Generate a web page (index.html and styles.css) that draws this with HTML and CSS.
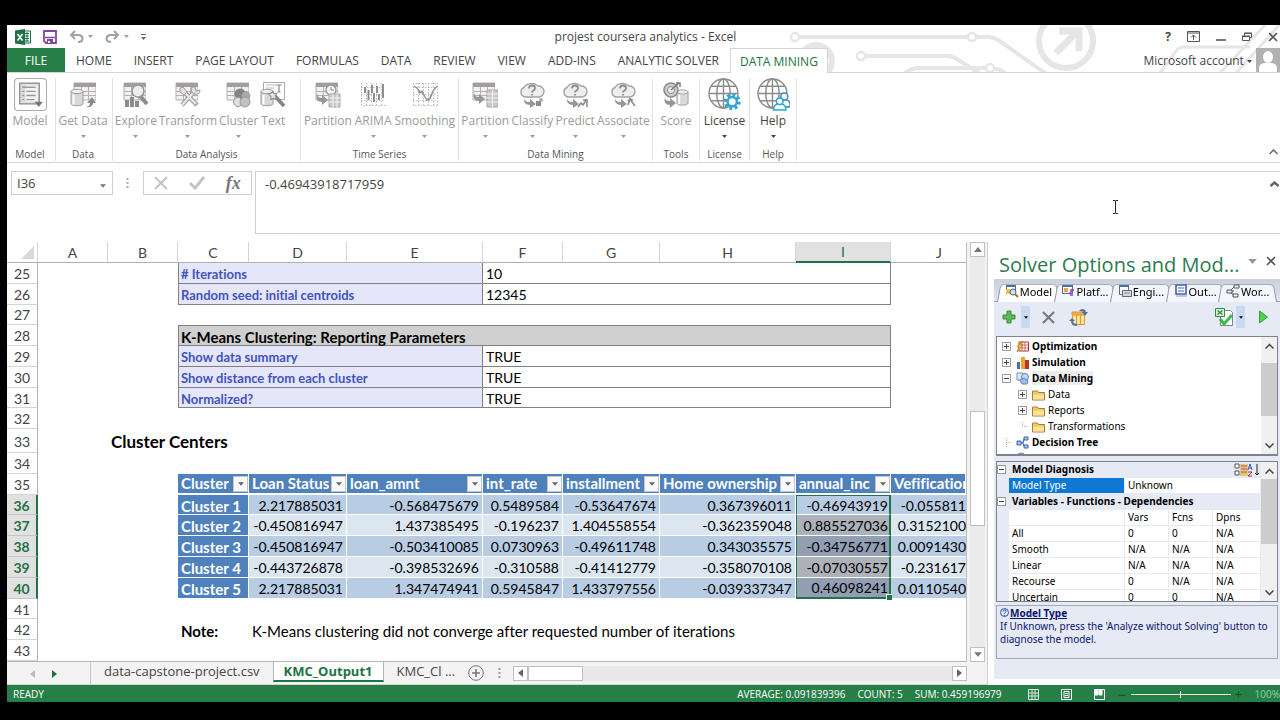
FILE: index.html
```html
<!DOCTYPE html>
<html lang="en">

<head>
    <meta charset="UTF-8">
    <meta name="viewport" content="width=device-width, initial-scale=1.0">
    <title>projest coursera analytics - Excel</title>
    <link rel="stylesheet" href="styles.css">
</head>

<body>
    <!-- shared icon parts -->
    <svg class="defs" aria-hidden="true">
        <symbol id="grid" viewBox="0 0 26 26">
            <path d="M4 1h22v17H4z" fill="#f2f0f1" stroke="#b3b1b2" />
            <path d="M4 1h22v4H4z" fill="#a09ea0" />
            <path d="M4 9.5h22M4 13.5h22M11.5 5v13M18.5 5v13" stroke="#b3b1b2" fill="none" />
        </symbol>
        <symbol id="cloud" viewBox="0 0 26 26">
            <path d="M6 15a5 5 0 0 1-1-9.5A8 6 0 0 1 19 4a5.5 5.5 0 0 1 1 11z" fill="#efeeef" stroke="#a3a1a3" stroke-width="1.4" />
            <path d="M10 6.5q0-3 3-3t3 2.5q0 1.5-1.5 2.5t-1.5 2M13 12v1.5" fill="none" stroke="#8d8b8d" stroke-width="1.8" />
            <path d="M5 16q0 4 6 4v-3l6 5-6 4v-3q-7 0-6-7z" fill="#989698" />
        </symbol>
        <symbol id="db" viewBox="0 0 14 18">
            <path d="M1 3v12c0 3 12 3 12 0V3z" fill="#d9d7d8" stroke="#9d9b9d" />
            <ellipse cx="7" cy="3" rx="6" ry="2.2" fill="#efeeef" stroke="#9d9b9d" />
            <path d="M3.5 6v10" stroke="#fff" stroke-width="2" />
        </symbol>
        <symbol id="globe" viewBox="0 0 32 32">
            <g fill="none" stroke="#8b8b8b" stroke-width="1.4">
                <circle cx="15" cy="15" r="14" fill="#fff" />
                <ellipse cx="15" cy="15" rx="6.5" ry="14" />
                <path d="M15 1v28M1 15h28M3 8h24M3 22h24" />
            </g>
        </symbol>
        <symbol id="folder" viewBox="0 0 13 12">
            <path d="M.5 2.5h5l1 1.5h6v7.5h-12z" fill="#efc65c" stroke="#a4813a" />
            <path d="M1 6h11v5H1z" fill="#fbe29a" />
        </symbol>
        <symbol id="plusbox" viewBox="0 0 9 9">
            <path d="M.5.5h8v8h-8z" fill="#fff" stroke="#9a9a9a" />
            <path d="M2 4.5h5M4.5 2v5" stroke="#445" />
        </symbol>
        <symbol id="minusbox" viewBox="0 0 9 9">
            <path d="M.5.5h8v8h-8z" fill="#fff" stroke="#9a9a9a" />
            <path d="M2 4.5h5" stroke="#445" />
        </symbol>
        <symbol id="down" viewBox="0 0 7 4">
            <path d="M0 0h7L3.5 4z" fill="currentColor" />
        </symbol>
    </svg>

    <div class="app">
        <header class="top">
            <svg class="circuit" viewBox="0 0 490 47" fill="none" stroke="#e6e6e6" stroke-width="4">
                <path d="M9 12h169M186 12h12q6 0 10 3l47 33M75 31h82q6 0 10 3l22 14M115 48q6-5 14-5h67M205 44q6 0 10 4" />
                <circle cx="5" cy="12" r="4" stroke-width="2.5" />
                <circle cx="182" cy="12" r="4" stroke-width="2.5" />
                <circle cx="71" cy="31" r="4" stroke-width="2.5" />
                <circle cx="200" cy="43" r="4" stroke-width="2.5" />
                <circle cx="26" cy="36" r="16" stroke-width="6" />
                <circle cx="276" cy="16" r="27" stroke-width="6" />
                <path d="M266 28l20-20M269 6h20v20" stroke-width="7" />
                <path d="M370 48l16-22q3-4 8-4h66M430 48l45-48M446 48l45-50" stroke-width="3" />
            </svg>
            <div class="title-bar">
                <div class="quick">
                    <svg width="16" height="16" viewBox="0 0 16 16">
                        <path d="M8 2h7.5v12H8z" fill="#fff" stroke="#1e7145" />
                        <path d="M9 4.5h5M9 7h5M9 9.5h5M9 12h5M12 3v10" stroke="#1e7145" />
                        <path d="M0 1.5L10 0v16L0 14.5z" fill="#1e7145" />
                        <path d="M2.5 5l5 6.5M7.5 5l-5 6.5" stroke="#fff" stroke-width="1.6" />
                    </svg>
                    <button type="button" aria-label="Save">
                        <svg width="14" height="14" viewBox="0 0 14 14">
                            <path d="M1 1h12v12H3l-2-2z" fill="#fff" stroke="#80499c" stroke-width="1.8" />
                            <path d="M2 7.5h10" stroke="#80499c" stroke-width="1.5" />
                            <path d="M4 9h6v5H4z" fill="#80499c" />
                            <path d="M5 11h2v2H5z" fill="#fff" />
                        </svg>
                    </button>
                    <button type="button" aria-label="Undo" class="undo">
                        <svg width="15" height="13" viewBox="0 0 15 13" fill="none" stroke="#a0a0a0" stroke-width="2">
                            <path d="M6 1L2 5l4 4M2 5h7q4.5 0 4.5 3.5T9 12" />
                        </svg>
                        <svg class="gray" width="5" height="3"><use href="#down" /></svg>
                    </button>
                    <button type="button" aria-label="Redo" class="undo">
                        <svg width="15" height="13" viewBox="0 0 15 13" fill="none" stroke="#a0a0a0" stroke-width="2">
                            <path d="M9 1l4 4-4 4M13 5H6Q1.5 5 1.5 8.5T6 12" />
                        </svg>
                        <svg class="gray" width="5" height="3"><use href="#down" /></svg>
                    </button>
                    <button type="button" aria-label="Customize toolbar">
                        <svg width="5" height="6" viewBox="0 0 5 6"><path d="M0 .5h5" stroke="#666" /><path d="M0 3h5L2.5 6z" fill="#666" /></svg>
                    </button>
                </div>
                <div class="title">projest coursera analytics - Excel</div>
                <div class="window-buttons">
                    <button type="button">?</button>
                    <button type="button" aria-label="Ribbon options">
                        <svg width="13" height="11" viewBox="0 0 13 11" fill="none" stroke="#555"><path d="M.5.5h12v10H.5zM1 2h11M6.5 9V4M4 6.5L6.5 4 9 6.5" /></svg>
                    </button>
                    <button type="button" aria-label="Minimize">
                        <svg width="10" height="11" viewBox="0 0 10 11"><path d="M0 9h10" stroke="#555" stroke-width="1.6" /></svg>
                    </button>
                    <button type="button" aria-label="Restore">
                        <svg width="10" height="10" viewBox="0 0 10 10" fill="none" stroke="#555"><path d="M.5 4.5h7v4h-7zM2.5 4V1.5h7v4H8M2 1h8M0 4h8" /></svg>
                    </button>
                    <button type="button" aria-label="Close">
                        <svg width="10" height="10" viewBox="0 0 10 10" stroke="#555" stroke-width="1.6"><path d="M1 1l8 8M9 1L1 9" /></svg>
                    </button>
                </div>
            </div>
            <nav class="tabs">
                <button type="button" class="file">FILE</button>
                <button type="button">HOME</button>
                <button type="button">INSERT</button>
                <button type="button">PAGE LAYOUT</button>
                <button type="button">FORMULAS</button>
                <button type="button">DATA</button>
                <button type="button">REVIEW</button>
                <button type="button">VIEW</button>
                <button type="button">ADD-INS</button>
                <button type="button">ANALYTIC SOLVER</button>
                <button type="button" class="active">DATA MINING</button>
                <div class="account">
                    <button type="button">Microsoft account <svg width="5" height="3"><use href="#down" /></svg></button>
                    <svg width="24" height="24" viewBox="0 0 24 24">
                        <path d="M0 0h24v24H0z" fill="#b1b1b1" />
                        <ellipse cx="12" cy="9" rx="5" ry="6" fill="#fff" />
                        <path d="M3 24v-4q0-4 5-5h8q5 1 5 5v4z" fill="#fff" />
                    </svg>
                </div>
            </nav>
        </header>

        <section class="ribbon">
            <div class="group w-model">
                <div class="buttons">
                    <button type="button" class="off">
                        <svg class="big" viewBox="0 0 32 32">
                            <path d="M.5 4q0-3.5 3.5-3.5h24q3.5 0 3.5 3.5v24q0 3.500-3.500 3.500H4q-3.500 0-3.500-3.500z" fill="#fff" stroke="#aaa" />
                            <path d="M5.5 5h19v20h-19z" fill="#dddbdc" stroke="#8a8a8a" stroke-width="1.2" />
                            <path d="M11 7h12v16H11z" fill="#f4f3f4" />
                            <path d="M8 9h4M12 9h9M12 13h9M8 13h2M12 17h9M8 17h2M12 21h8M8 21h2" stroke="#9a989a" stroke-width="1.3" />
                            <path d="M20 23h8l-4 5z" fill="#777" />
                        </svg>
                        <span>Model</span>
                    </button>
                </div>
                <div class="name">Model</div>
            </div>
            <div class="group w-data">
                <div class="buttons">
                    <button type="button" class="off">
                        <svg viewBox="0 0 26 26"><use href="#grid" width="26" height="26" /><use href="#db" y="6" width="14" height="19" /><path d="M15 25q5 0 5-4h-3l5-6 4 6h-3q0 5-8 4z" fill="#8d8b8d" /></svg>
                        <span>Get Data</span><svg class="arrow"><use href="#down" /></svg>
                    </button>
                </div>
                <div class="name">Data</div>
            </div>
            <div class="group w-analysis">
                <div class="buttons">
                    <button type="button" class="off">
                        <svg viewBox="0 0 26 26"><use href="#grid" x="-3" width="26" height="26" /><path d="M2 18h4v7H2zM7 15h4v10H7zM12 19h4v6h-4z" fill="#8d8b8d" /><path d="M17 14l7 8" stroke="#8d8b8d" stroke-width="4" /><circle cx="15" cy="9" r="6" fill="#eeedee" stroke="#999799" stroke-width="1.6" /></svg>
                        <span>Explore</span><svg class="arrow"><use href="#down" /></svg>
                    </button>
                    <button type="button" class="off">
                        <svg viewBox="0 0 26 26"><use href="#grid" x="-3" width="26" height="26" /><path d="M7 23L20 9M8 9l14 14" stroke="#9d9b9d" stroke-width="4.5" /><path d="M7 23L20 9M10 11l11 11" stroke="#e8e6e8" stroke-width="2.4" /><path d="M17 5q-2 6 3 7t5-4l-4 1-1-4zM5 6l3-1 4 5-3 3-4-3z" fill="#e2e0e2" stroke="#9d9b9d" /></svg>
                        <span>Transform</span><svg class="arrow"><use href="#down" /></svg>
                    </button>
                    <button type="button" class="off">
                        <svg viewBox="0 0 26 26"><use href="#grid" x="-3" width="26" height="26" /><circle cx="14" cy="12" r="5.5" fill="#858385" /><circle cx="20" cy="14" r="4.5" fill="#aaa8aa" /><circle cx="12" cy="20" r="4.5" fill="#e0dee0" stroke="#999" /><circle cx="19" cy="20" r="5" fill="#c2c0c2" stroke="#999" /></svg>
                        <span>Cluster</span><svg class="arrow"><use href="#down" /></svg>
                    </button>
                    <button type="button" class="off">
                        <svg viewBox="0 0 26 26"><path d="M3.5.5h21v17h-21z" fill="#fff" stroke="#aaa" /><path d="M6 3h10M6 6h8" stroke="#bbb" /><path d="M16 3h6M19 3v7M17.5 10h3" stroke="#888" stroke-width="1.2" fill="none" /><use href="#db" y="6" width="14" height="19" /><path d="M14 13l10 11" stroke="#858385" stroke-width="3.5" /><path d="M13 9l1 3 3-1-2 3 2 3-4-1-2 2v-4l-3-2 4-1z" fill="#e8e6e8" stroke="#888" /></svg>
                        <span>Text</span>
                    </button>
                </div>
                <div class="name">Data Analysis</div>
            </div>
            <div class="group w-series">
                <div class="buttons">
                    <button type="button" class="off">
                        <svg viewBox="0 0 26 26"><use href="#grid" x="-3" width="26" height="26" /><circle cx="16" cy="8" r="5" fill="#f4f3f4" stroke="#999" stroke-width="1.4" /><path d="M16 5v3h3" stroke="#888" fill="none" /><path d="M2 11q0 5 5 5v-3l6 5-6 5v-3q-7 0-5-9z" fill="#989698" /><path d="M14 12h11v13H14z" fill="#c9c7c9" stroke="#aaa" /><path d="M14 16h11M14 20h11M18 12v13M22 12v13" stroke="#f4f3f4" /></svg>
                        <span>Partition</span>
                    </button>
                    <button type="button" class="off">
                        <svg viewBox="0 0 26 26"><path d="M1.5 1v22.5H26M6.5 1v22M11.5 1v22M16.5 1v22M21.5 1v22M1 5.5h24M1 12.5h24M1 18.5h24" stroke="#bbb" stroke-dasharray="1.5 1.5" fill="none" /><path d="M5 5v6M8.5 8v10M12 3v8M14 11v9M17 4v7M19 12v6M23 2v14" stroke="#858385" stroke-width="1.8" /></svg>
                        <span>ARIMA</span><svg class="arrow"><use href="#down" /></svg>
                    </button>
                    <button type="button" class="off">
                        <svg viewBox="0 0 26 26"><path d="M1.5 1v22.5H26M6.5 1v22M11.5 1v22M16.5 1v22M21.5 1v22M25.5 1v22M1 1.500h24M1 5.5h24M1 12.5h24M1 18.5h24" stroke="#bbb" stroke-dasharray="1.5 1.5" fill="none" /><path d="M2 4l3 2 3 5 2-2 3 6 2 3 3-1 3-8 4-5" stroke="#858385" stroke-width="1.3" fill="none" /><path d="M2 4q8 5 12 13 4 0 5-5l6-8" stroke="#aaa" fill="none" /></svg>
                        <span>Smoothing</span><svg class="arrow"><use href="#down" /></svg>
                    </button>
                </div>
                <div class="name">Time Series</div>
            </div>
            <div class="group w-mining">
                <div class="buttons">
                    <button type="button" class="off">
                        <svg viewBox="0 0 26 26"><use href="#grid" x="-3" width="26" height="26" /><path d="M2 10q0 5 5 5v-3l6 5-6 5v-3q-7 0-5-9z" fill="#989698" /><path d="M15 8h11v17H15z" fill="#c9c7c9" stroke="#aaa" /><path d="M15 12h11M15 16h11M15 20h11M20.5 8v17" stroke="#f4f3f4" /></svg>
                        <span>Partition</span><svg class="arrow"><use href="#down" /></svg>
                    </button>
                    <button type="button" class="off">
                        <svg viewBox="0 0 26 26"><use href="#cloud" width="26" height="26" /><path d="M17 19h5v5h-5z" fill="#8d8b8d" /><circle cx="22" cy="18" r="2" fill="#aaa" /></svg>
                        <span>Classify</span><svg class="arrow"><use href="#down" /></svg>
                    </button>
                    <button type="button" class="off">
                        <svg viewBox="0 0 26 26"><use href="#cloud" width="26" height="26" /><path d="M16 25l3-4 2 2 4-6M25 25v-7h-4" stroke="#8d8b8d" stroke-width="1.6" fill="none" /></svg>
                        <span>Predict</span><svg class="arrow"><use href="#down" /></svg>
                    </button>
                    <button type="button" class="off">
                        <svg viewBox="0 0 26 26"><use href="#cloud" width="26" height="26" /><path d="M18 23l2-6 2 3 3 4M18 19l2-2 3 1" stroke="#8d8b8d" stroke-width="1.6" fill="none" /></svg>
                        <span>Associate</span><svg class="arrow"><use href="#down" /></svg>
                    </button>
                </div>
                <div class="name">Data Mining</div>
            </div>
            <div class="group w-tools">
                <div class="buttons">
                    <button type="button" class="off">
                        <svg viewBox="0 0 26 26"><use href="#db" x="13" y="6" width="13" height="19" /><circle cx="8" cy="8" r="7" fill="#ccc" stroke="#8d8b8d" stroke-width="1.6" /><circle cx="8" cy="8" r="3.5" fill="#eee" stroke="#8d8b8d" /><path d="M8 8l8-7M13 1h4v4" stroke="#777" stroke-width="1.4" fill="none" /><path d="M2 15q0 4 5 4v-3l6 5-6 5v-3q-7 0-5-8z" fill="#989698" /></svg>
                        <span>Score</span>
                    </button>
                </div>
                <div class="name">Tools</div>
            </div>
            <div class="group w-license">
                <div class="buttons">
                    <button type="button">
                        <svg class="big" viewBox="0 0 32 32"><use href="#globe" width="32" height="32" /><circle cx="23.5" cy="23" r="6.5" fill="none" stroke="#2da5d8" stroke-width="3.5" stroke-dasharray="2.6 2.5" /><circle cx="23.5" cy="23" r="4.5" fill="#fff" stroke="#2da5d8" stroke-width="2.4" /></svg>
                        <span>License</span><svg class="arrow"><use href="#down" /></svg>
                    </button>
                </div>
                <div class="name">License</div>
            </div>
            <div class="group w-help">
                <div class="buttons">
                    <button type="button">
                        <svg class="big" viewBox="0 0 32 32"><use href="#globe" width="32" height="32" /><g fill="#fff" stroke-width="1.5"><path d="M21 28q0-7 6-7t5 7z" stroke="#4a8fb5" /><circle cx="26.5" cy="18" r="3.4" stroke="#4a8fb5" /><path d="M16 31q0-6 6-6t6 6z" stroke="#2da5d8" /><circle cx="22" cy="22.5" r="3.2" stroke="#2da5d8" /></g></svg>
                        <span>Help</span><svg class="arrow"><use href="#down" /></svg>
                    </button>
                </div>
                <div class="name">Help</div>
            </div>
            <button type="button" class="collapse" aria-label="Collapse the ribbon">
                <svg width="9" height="6" viewBox="0 0 9 6" fill="none" stroke="#666" stroke-width="1.5"><path d="M.5 5l4-4 4 4" /></svg>
            </button>
        </section>

        <section class="formula-bar">
            <div class="name-box">
                <input type="text" value="I36" aria-label="Name box">
                <button type="button" aria-label="Names"><svg width="6" height="4"><use href="#down" /></svg></button>
            </div>
            <svg class="grip" width="3" height="24" viewBox="0 0 3 24"><path d="M1.5 7v12" stroke="#aaa" stroke-width="2" stroke-dasharray="2 2" /></svg>
            <div class="fx-box">
                <button type="button" aria-label="Cancel"><svg width="14" height="14" viewBox="0 0 14 14" stroke="#c3c3c3" stroke-width="2"><path d="M1 1l12 12M13 1L1 13" /></svg></button>
                <button type="button" aria-label="Enter"><svg width="16" height="14" viewBox="0 0 16 14" fill="none" stroke="#c3c3c3" stroke-width="3"><path d="M1 7l5 5 9-11" /></svg></button>
                <button type="button" class="fx">fx</button>
            </div>
            <textarea class="formula" aria-label="Formula">-0.46943918717959</textarea>
            <button type="button" class="shrink" aria-label="Collapse formula bar"><svg width="9" height="6" viewBox="0 0 9 6" fill="none" stroke="#666" stroke-width="2.4"><path d="M.5 5l4-3.5 4 3.5" /></svg></button>
            <svg class="ibeam" width="7" height="14" viewBox="0 0 7 14" fill="none" stroke="#222"><path d="M1 .5h2l.5.5.5-.5h2M3.5 1v12M1 13.5h2l.5-.5.5.5h2" /></svg>
        </section>

        <main class="work">
            <div class="book">
                <div class="sheet-row">
                    <div class="sheet-wrap">
                        <table class="sheet">
                            <colgroup>
                                <col class="c-num"><col class="c-70"><col class="c-70"><col class="c-71"><col class="c-98"><col class="c-136"><col class="c-80"><col class="c-97"><col class="c-136"><col class="c-95"><col>
                            </colgroup>
                            <thead>
                                <tr>
                                    <th class="corner"><svg width="13" height="13" viewBox="0 0 13 13"><path d="M13 0v13H0z" fill="#d9d9d9" /></svg></th>
                                    <th>A</th><th>B</th><th>C</th><th>D</th><th>E</th><th>F</th><th>G</th><th>H</th><th class="picked">I</th><th class="partial">J</th>
                                </tr>
                            </thead>
                            <tbody>
                                <tr><th>25</th><td colspan="2"></td><td colspan="3" class="param"># Iterations</td><td colspan="4" class="value">10</td><td></td></tr>
                                <tr><th>26</th><td colspan="2"></td><td colspan="3" class="param">Random seed: initial centroids</td><td colspan="4" class="value">12345</td><td></td></tr>
                                <tr><th>27</th><td colspan="10"></td></tr>
                                <tr><th>28</th><td colspan="2"></td><td colspan="7" class="caption">K-Means Clustering: Reporting Parameters</td><td></td></tr>
                                <tr><th>29</th><td colspan="2"></td><td colspan="3" class="param">Show data summary</td><td colspan="4" class="value">TRUE</td><td></td></tr>
                                <tr><th>30</th><td colspan="2"></td><td colspan="3" class="param">Show distance from each cluster</td><td colspan="4" class="value">TRUE</td><td></td></tr>
                                <tr><th>31</th><td colspan="2"></td><td colspan="3" class="param">Normalized?</td><td colspan="4" class="value">TRUE</td><td></td></tr>
                                <tr><th>32</th><td colspan="10"></td></tr>
                                <tr class="tall"><th>33</th><td></td><td colspan="9" class="heading">Cluster Centers</td></tr>
                                <tr><th>34</th><td colspan="10"></td></tr>
                                <tr class="head">
                                    <th>35</th><td colspan="2"></td>
                                    <td><div><span>Cluster</span><button type="button" aria-label="Filter Cluster"><svg><use href="#down" /></svg></button></div></td>
                                    <td><div><span>Loan Status</span><button type="button" aria-label="Filter Loan Status"><svg><use href="#down" /></svg></button></div></td>
                                    <td><div><span>loan_amnt</span><button type="button" aria-label="Filter loan_amnt"><svg><use href="#down" /></svg></button></div></td>
                                    <td><div><span>int_rate</span><button type="button" aria-label="Filter int_rate"><svg><use href="#down" /></svg></button></div></td>
                                    <td><div><span>installment</span><button type="button" aria-label="Filter installment"><svg><use href="#down" /></svg></button></div></td>
                                    <td><div><span>Home ownership</span><button type="button" aria-label="Filter Home ownership"><svg><use href="#down" /></svg></button></div></td>
                                    <td><div><span>annual_inc</span><button type="button" aria-label="Filter annual_inc"><svg><use href="#down" /></svg></button></div></td>
                                    <td><div><span>Vefification</span></div></td>
                                </tr>
                                <tr class="data"><th>36</th><td colspan="2"></td><td class="key">Cluster 1</td><td>2.217885031</td><td>-0.568475679</td><td>0.5489584</td><td>-0.53647674</td><td>0.367396011</td><td class="sel first">-0.46943919</td><td class="cut">-0.055811</td></tr>
                                <tr class="data"><th>37</th><td colspan="2"></td><td class="key">Cluster 2</td><td>-0.450816947</td><td>1.437385495</td><td>-0.196237</td><td>1.404558554</td><td>-0.362359048</td><td class="sel">0.885527036</td><td class="cut">0.3152100</td></tr>
                                <tr class="data"><th>38</th><td colspan="2"></td><td class="key">Cluster 3</td><td>-0.450816947</td><td>-0.503410085</td><td>0.0730963</td><td>-0.49611748</td><td>0.343035575</td><td class="sel">-0.34756771</td><td class="cut">0.0091430</td></tr>
                                <tr class="data"><th>39</th><td colspan="2"></td><td class="key">Cluster 4</td><td>-0.443726878</td><td>-0.398532696</td><td>-0.310588</td><td>-0.41412779</td><td>-0.358070108</td><td class="sel">-0.07030557</td><td class="cut">-0.231617</td></tr>
                                <tr class="data"><th>40</th><td colspan="2"></td><td class="key">Cluster 5</td><td>2.217885031</td><td>1.347474941</td><td>0.5945847</td><td>1.433797556</td><td>-0.039337347</td><td class="sel last">0.46098241</td><td class="cut">0.0110540</td></tr>
                                <tr><th>41</th><td colspan="10"></td></tr>
                                <tr><th>42</th><td colspan="2"></td><td class="note"><b>Note:</b></td><td colspan="7" class="note">K-Means clustering did not converge after requested number of iterations</td></tr>
                                <tr><th>43</th><td colspan="10"></td></tr>
                            </tbody>
                        </table>
                    </div>
                    <div class="vscroll">
                        <button type="button" aria-label="Scroll up"><svg width="8" height="5" viewBox="0 0 8 5"><path d="M0 5h8L4 0z" fill="#777" /></svg></button>
                        <div class="track"><div class="thumb"></div></div>
                        <button type="button" aria-label="Scroll down"><svg width="8" height="5"><use href="#down" /></svg></button>
                    </div>
                </div>
                <div class="sheet-tabs">
                    <button type="button" class="step" aria-label="Previous sheet"><svg width="5" height="8" viewBox="0 0 5 8"><path d="M5 0v8L0 4z" fill="#bbb" /></svg></button>
                    <button type="button" class="step" aria-label="Next sheet"><svg width="5" height="8" viewBox="0 0 5 8"><path d="M0 0v8l5-4z" fill="#1e7145" /></svg></button>
                    <div class="names">
                        <button type="button">data-capstone-project.csv</button>
                        <button type="button" class="active">KMC_Output1</button>
                        <button type="button">KMC_Cl ...</button>
                    </div>
                    <button type="button" class="add" aria-label="New sheet"><svg width="16" height="16" viewBox="0 0 16 16" fill="none" stroke="#777"><circle cx="8" cy="8" r="7.3" /><path d="M8 4v8M4 8h8" stroke-width="1.6" /></svg></button>
                    <svg class="dots" width="3" height="12" viewBox="0 0 3 12"><path d="M1.5 1v10" stroke="#999" stroke-width="2" stroke-dasharray="2 2" /></svg>
                    <div class="hscroll">
                        <button type="button" aria-label="Scroll left"><svg width="5" height="8" viewBox="0 0 5 8"><path d="M5 0v8L0 4z" fill="#666" /></svg></button>
                        <div class="track"><div class="thumb"></div></div>
                        <button type="button" aria-label="Scroll right"><svg width="5" height="8" viewBox="0 0 5 8"><path d="M0 0v8l5-4z" fill="#666" /></svg></button>
                    </div>
                </div>
            </div>

            <aside class="pane">
                <div class="pane-title">
                    <h2>Solver Options and Mod...</h2>
                    <button type="button" aria-label="Pane options"><svg width="9" height="5"><use href="#down" /></svg></button>
                    <button type="button" aria-label="Close pane"><svg width="10" height="10" viewBox="0 0 10 10" stroke="#555" stroke-width="1.6"><path d="M1 1l8 8M9 1L1 9" /></svg></button>
                </div>
                <div class="pane-body">
                    <div class="pane-tabs">
                        <button type="button" class="active"><svg viewBox="0 0 14 14"><path d="M1.5 1.5h9v7h-9z" fill="#fff" stroke="#4a6fa5" /><path d="M1 2h10" stroke="#4a6fa5" stroke-width="2" /><path d="M1 5h4v5H1z" fill="#f2c14e" /><circle cx="8" cy="8" r="3" fill="#cfe2f7" stroke="#557" /><path d="M10 10l3 3" stroke="#b06a3a" stroke-width="2" /></svg>Model</button>
                        <button type="button"><svg viewBox="0 0 14 14"><path d="M1.5 1.5h10v8h-10z" fill="#fff" stroke="#4a6fa5" /><path d="M1 2h11" stroke="#4a6fa5" stroke-width="2" /><path d="M3 4h4v4H3z" fill="#f2a03e" /><path d="M8 10l4-4M9 6h4M9 11h3" stroke="#9a3fb5" stroke-width="1.6" /></svg>Platf...</button>
                        <button type="button"><svg viewBox="0 0 14 14"><path d="M1.5 1.5h9v9h-9z" fill="#fff" stroke="#4a6fa5" /><path d="M1 2h10" stroke="#4a6fa5" stroke-width="2" /><path d="M4.5 6.5h9v6h-9z" fill="#d5dbe5" stroke="#667" /><path d="M6 9h6" stroke="#889" /></svg>Engi...</button>
                        <button type="button"><svg viewBox="0 0 14 14"><path d="M2 1h10v9H2z" fill="#fff" stroke="#3f62b0" stroke-width="1.6" /><path d="M4 4h6M4 7h6" stroke="#3f62b0" /><path d="M2 12h11" stroke="#99a" /></svg>Out...</button>
                        <button type="button"><svg viewBox="0 0 14 14"><path d="M1 6h5v3H1zM8 1h5v3H8zM7 10h5v3H7zM6 7h2M8 3L5 6M5 9l3 2" fill="#dff" stroke="#555" /></svg>Wor...</button>
                    </div>
                    <div class="pane-tools">
                        <button type="button" aria-label="Add"><svg width="14" height="14" viewBox="0 0 14 14"><path d="M5 1h4v4h4v4H9v4H5V9H1V5h4z" fill="#5fb95a" stroke="#3a8a3a" /></svg></button>
                        <button type="button" class="drop" aria-label="Add options"><svg width="4" height="3"><use href="#down" /></svg></button>
                        <button type="button" class="delete" aria-label="Delete"><svg width="13" height="13" viewBox="0 0 14 14" stroke="#76787d" stroke-width="2.2"><path d="M1 1l12 12M13 1L1 13" /></svg></button>
                        <button type="button" aria-label="Refresh model"><svg width="20" height="18" viewBox="0 0 20 18"><path d="M3.5 4.5h12v12h-12z" fill="#fbe3a4" stroke="#e09a2a" /><path d="M3 4h13v3H3zM7.5 6v10M11.5 6v10" stroke="#e09a2a" fill="#f2b04a" /><path d="M10 3q1-2 4-2 3 1 3 3h2l-3 4-3-4h2q-2-1-5-1z" fill="#4d6fb4" /><path d="M3 10l3 3H4q0 3 4 3v2q-6 0-6-5H0z" fill="#4d6fb4" /></svg></button>
                        <button type="button" class="check" aria-label="Analyze without solving"><svg width="19" height="19" viewBox="0 0 19 19"><path d="M5.5 2.5h10l2 2v13h-12z" fill="#fff" stroke="#789" /><path d="M.5.5h9v8h-9z" fill="#dff0df" stroke="#2e8b45" /><path d="M2.5 2.5l5 4M7.5 2.5l-5 4" stroke="#2e8b45" stroke-width="1.5" /><path d="M5 11l4 5 8-9" fill="none" stroke="#3cba4c" stroke-width="3" /></svg></button>
                        <button type="button" class="drop" aria-label="Analyze options"><svg width="4" height="3"><use href="#down" /></svg></button>
                        <button type="button" class="run" aria-label="Solve"><svg width="9" height="14" viewBox="0 0 9 14"><path d="M.5 1v12L8.5 7z" fill="#4fd14f" stroke="#2fa13a" /></svg></button>
                    </div>
                    <div class="tree-box">
                        <ul class="tree">
                            <li><svg class="box"><use href="#plusbox" /></svg><svg class="pic" viewBox="0 0 13 13"><path d="M3 2h9.5v9H3z" fill="#fff" stroke="#a33" /><path d="M3 5h9M3 8h9M6 2v9M9 2v9" stroke="#c66" /><path d="M1 12l2-5H1l5-6-1 4h2z" fill="#f5b733" stroke="#b57a12" stroke-width=".7" /></svg><b>Optimization</b></li>
                            <li><svg class="box"><use href="#plusbox" /></svg><svg class="pic" viewBox="0 0 13 13"><path d="M1 6h3v7H1z" fill="#3f6fc4" /><path d="M5 1h4v12H5z" fill="#f0a52a" /><path d="M9 4h4v9H9z" fill="#b5372e" /></svg><b>Simulation</b></li>
                            <li><svg class="box"><use href="#minusbox" /></svg><svg class="pic" viewBox="0 0 13 13"><path d="M1 1h6v7H1z" fill="#dfe9f7" stroke="#6b8fc4" /><circle cx="9" cy="5" r="3.5" fill="#c6dbf5" stroke="#5a82bd" /><path d="M4 8l4-2 4 3-1 3H6z" fill="#9fc0ea" stroke="#5a82bd" /></svg><b class="current">Data Mining</b></li>
                            <li class="sub"><svg class="box"><use href="#plusbox" /></svg><svg class="pic"><use href="#folder" /></svg>Data</li>
                            <li class="sub"><svg class="box"><use href="#plusbox" /></svg><svg class="pic"><use href="#folder" /></svg>Reports</li>
                            <li class="sub"><svg class="box" viewBox="0 0 9 9"><path d="M4.5 0v4.5H9" fill="none" stroke="#aaa" stroke-dasharray="1 1" /></svg><svg class="pic"><use href="#folder" /></svg>Transformations</li>
                            <li><svg class="box" viewBox="0 0 9 9"><path d="M4.5 0v9M4.5 4.5H9" fill="none" stroke="#aaa" stroke-dasharray="1 1" /></svg><svg class="pic" viewBox="0 0 13 13"><path d="M1 5h4v4H1zM8 1h4v3H8zM8 9h4v3H8zM5 7h2l1-4M7 7l1 3" fill="#a9c4ee" stroke="#3f62a8" /></svg><b>Decision Tree</b></li>
                            <li><svg class="box" viewBox="0 0 9 9"></svg><svg class="pic" viewBox="0 0 13 13"><circle cx="5" cy="5" r="4" fill="#c6dbf5" stroke="#5a82bd" /></svg><b>Decision Table</b></li>
                        </ul>
                        <div class="bar">
                            <button type="button" aria-label="Up"><svg viewBox="0 0 9 6"><path d="M.5 5.5l4-4 4 4" /></svg></button>
                            <div class="track"><div class="thumb tree-thumb"></div></div>
                            <button type="button" aria-label="Down"><svg viewBox="0 0 9 6"><path d="M.5.5l4 4 4-4" /></svg></button>
                        </div>
                    </div>
                    <div class="prop-box">
                        <div class="props-clip">
                            <table class="props">
                                <colgroup><col class="p-box"><col><col class="p-44"><col class="p-44"><col class="p-48"></colgroup>
                                <tbody>
                                    <tr class="cat"><td><svg class="box"><use href="#minusbox" /></svg></td><th colspan="3">Model Diagnosis</th><td class="sort"><svg width="26" height="14" viewBox="0 0 26 14"><path d="M1 1h4v4H1zM1 8h4v4H1z" fill="#fff" stroke="#555" /><path d="M6 1h8v12H6z" fill="#e8c47a" /><path d="M7 3h6M7 6h6M7 9h6" stroke="#a57" /><path d="M14 7l2-6 2 6M15 5h2" fill="none" stroke="#35c" /><path d="M14 9h4l-4 4h4" fill="none" stroke="#b23" /><path d="M23 1v11M21 10l2 2 2-2" fill="none" stroke="#222" /></svg></td></tr>
                                    <tr class="chosen"><td></td><th>Model Type</th><td colspan="3">Unknown</td></tr>
                                    <tr class="cat"><td><svg class="box"><use href="#minusbox" /></svg></td><th colspan="4">Variables - Functions - Dependencies</th></tr>
                                    <tr><td></td><th></th><td>Vars</td><td>Fcns</td><td>Dpns</td></tr>
                                    <tr><td></td><th>All</th><td>0</td><td>0</td><td>N/A</td></tr>
                                    <tr><td></td><th>Smooth</th><td>N/A</td><td>N/A</td><td>N/A</td></tr>
                                    <tr><td></td><th>Linear</th><td>N/A</td><td>N/A</td><td>N/A</td></tr>
                                    <tr><td></td><th>Recourse</th><td>0</td><td>N/A</td><td>N/A</td></tr>
                                    <tr><td></td><th>Uncertain</th><td>0</td><td>0</td><td>N/A</td></tr>
                                </tbody>
                            </table>
                        </div>
                        <div class="bar">
                            <button type="button" aria-label="Up"><svg viewBox="0 0 9 6"><path d="M.5 5.5l4-4 4 4" /></svg></button>
                            <div class="track"><div class="thumb prop-thumb"></div></div>
                            <button type="button" aria-label="Down"><svg viewBox="0 0 9 6"><path d="M.5.5l4 4 4-4" /></svg></button>
                        </div>
                    </div>
                    <div class="hint">
                        <svg width="9" height="9" viewBox="0 0 9 9" fill="none" stroke="#2a4fb0"><circle cx="4.5" cy="4.5" r="4" /><path d="M3 3.5q0-1.5 1.5-1.5t1.5 1.2-1.5 2v.8M4.5 7v1" /></svg><a href="#model-type">Model Type</a>
                        <p>If Unknown, press the 'Analyze without Solving' button to diagnose the model.</p>
                    </div>
                </div>
            </aside>
        </main>

        <footer class="status">
            <span class="ready">READY</span>
            <span>AVERAGE: 0.091839396</span>
            <span>COUNT: 5</span>
            <span>SUM: 0.459196979</span>
            <div class="views">
                <button type="button" aria-label="Normal view"><svg width="11" height="11" viewBox="0 0 11 11" fill="none" stroke="#d7ebde"><path d="M.5.5h10v10H.5zM4 0v11M7 0v11M0 4h11M0 7h11" /></svg></button>
                <button type="button" aria-label="Page layout"><svg width="11" height="11" viewBox="0 0 11 11" fill="none" stroke="#fff"><path d="M.5.5h10v10H.5zM3 2.5h5v6H3zM4 4.5h3M4 6.5h3" /></svg></button>
                <button type="button" aria-label="Page break preview"><svg width="11" height="11" viewBox="0 0 11 11" fill="none" stroke="#fff"><path d="M.5.5h10v10H.5z" /><path d="M1 1h3v5H1zM5 1h3v5H5z" fill="#fff" /></svg></button>
            </div>
            <div class="zoom">
                <button type="button">−</button>
                <input type="range" min="10" max="190" value="100" aria-label="Zoom">
                <button type="button">+</button>
            </div>
            <span class="percent">100%</span>
        </footer>
    </div>
</body>

</html>
```
FILE: styles.css
```css
* {
    box-sizing: border-box;
}

body {
    margin: 0;
    background-color: #000000;
    font-family: "Open Sans", "Noto Sans", sans-serif;
    font-size: 12px;
    color: #444444;
}

button,
input,
textarea {
    font: inherit;
    color: inherit;
    margin: 0;
    padding: 0;
    border: none;
    background: none;
    border-radius: 0;
    outline: none;
}

button {
    white-space: nowrap;
}

svg {
    flex: none;
}

.defs {
    display: none;
}

.app {
    height: 100vh;
    padding: 25px 0 18px 7px;
    display: flex;
    flex-direction: column;
    overflow: hidden;
}

/* title bar and ribbon tabs */
.top {
    position: relative;
    background-color: #ffffff;
}

.circuit {
    position: absolute;
    right: 0;
    top: 0;
    width: 490px;
    height: 47px;
}

.title-bar {
    position: relative;
    height: 23px;
    display: grid;
    grid-template-columns: 1fr auto 1fr;
    align-items: center;
    padding-left: 4px;
}

.quick {
    display: flex;
    align-items: center;
    gap: 12px;
    padding-left: 4px;
}

.quick button {
    display: flex;
    align-items: center;
}

.quick .undo {
    gap: 4px;
}

.gray {
    color: #a0a0a0;
}

.window-buttons {
    display: flex;
    justify-content: flex-end;
    align-items: center;
    gap: 16px;
    padding-right: 2px;
    font-weight: bold;
}

.window-buttons button {
    display: flex;
}

.tabs {
    position: relative;
    height: 25px;
    display: flex;
    border-bottom: 1px solid #d5d5d5;
}

.tabs > button {
    padding: 0 11px;
}

.tabs .file {
    width: 58px;
    background-color: #267f46;
    color: #ffffff;
}

.tabs .active {
    height: 25px;
    padding: 0 9px;
    color: #217346;
    background-color: #ffffff;
    border: 1px solid #d5d5d5;
    border-bottom: none;
}

.account {
    margin-left: auto;
    display: flex;
    align-items: center;
    gap: 4px;
}

.account button svg {
    vertical-align: middle;
}

/* ribbon */
.ribbon {
    height: 90px;
    display: flex;
    padding: 5px 0 1px;
    background-color: #ffffff;
    border-bottom: 1px solid #d5d5d5;
}

.group {
    display: flex;
    flex-direction: column;
    border-right: 1px solid #e1e1e1;
}

.w-model { width: 49px; }
.w-data { width: 57px; }
.w-analysis { width: 188px; }
.w-series { width: 158px; }
.w-mining { width: 194px; }
.w-tools { width: 47px; }
.w-license { width: 50px; }
.w-help { width: 47px; }

.w-model,
.w-data {
    padding-right: 2px;
}

.buttons {
    flex: 1;
    display: flex;
    justify-content: space-evenly;
}

.w-analysis .buttons {
    padding-right: 12px;
}

.buttons button {
    display: flex;
    flex-direction: column;
    align-items: center;
}

.buttons svg {
    width: 26px;
    height: 26px;
    margin: 4px 0 3px;
}

.buttons .big {
    width: 33px;
    height: 33px;
    margin: 0;
}

.buttons span {
    line-height: 20px;
}

.buttons .off {
    color: #9b9b9b;
}

.buttons .arrow {
    width: 5px;
    height: 3px;
    margin: 4px 0 0;
}

.name {
    line-height: 14px;
    font-size: 10px;
    text-align: center;
    color: #555555;
}

.collapse {
    margin-left: auto;
    align-self: flex-end;
    padding: 0 2px 2px 0;
}

/* formula bar */
.formula-bar {
    position: relative;
    display: flex;
    align-items: flex-start;
    padding: 8px 0 8px 4px;
    background-color: #ffffff;
    font-size: 13px;
}

.name-box,
.fx-box {
    height: 24px;
    display: flex;
    align-items: center;
    border: 1px solid #cfcfcf;
}

.name-box {
    width: 102px;
}

.name-box input {
    flex: 1;
    min-width: 0;
    padding-left: 5px;
}

.name-box button {
    width: 18px;
    line-height: 1;
    color: #777777;
}

.grip {
    margin: 0 14px 0 13px;
}

.fx-box {
    width: 109px;
    justify-content: space-around;
}

.fx-box button {
    display: flex;
}

.fx-box .fx {
    font: italic bold 18px "Liberation Serif", serif;
    color: #777777;
}

.formula {
    flex: 1;
    height: 63px;
    margin-left: 3px;
    padding: 3px 9px;
    border: 1px solid #cfcfcf;
    border-right: none;
    resize: none;
}

.shrink {
    position: absolute;
    right: 1px;
    top: 10px;
}

.ibeam {
    position: absolute;
    right: 161px;
    top: 37px;
}

/* sheet */
.work {
    flex: 1;
    min-height: 0;
    display: flex;
    background-color: #ffffff;
}

.book {
    flex: 1;
    min-width: 0;
    display: flex;
    flex-direction: column;
    border-right: 1px solid #d0d0d0;
}

.sheet-row {
    flex: 1;
    min-height: 0;
    display: flex;
}

.sheet-wrap {
    flex: 1;
    min-width: 0;
    height: 100%;
    overflow: hidden;
    border-right: 1px solid #c0c0c0;
    border-bottom: 1px solid #b5b5b5;
}

.sheet {
    width: 100%;
    height: 100%;
    table-layout: fixed;
    border-collapse: separate;
    border-spacing: 0;
    font-family: Lato, sans-serif;
    font-size: 14px;
    line-height: 16px;
    font-variant-ligatures: none;
    color: #000000;
}

.c-num { width: 31px; }
.c-70 { width: 70px; }
.c-71 { width: 71px; }
.c-80 { width: 80px; }
.c-95 { width: 95px; }
.c-97 { width: 97px; }
.c-98 { width: 98px; }
.c-136 { width: 136px; }

.sheet td,
.sheet th {
    height: 20px;
    padding: 2px 3px 0;
    white-space: nowrap;
}

.sheet th {
    font-weight: normal;
    color: #444444;
    border-right: 1px solid #d5d5d5;
}

.sheet thead th {
    height: 21px;
    padding-top: 1px;
    border-bottom: 1px solid #b0b0b0;
}

.sheet .corner svg {
    display: block;
    margin-left: auto;
}

.sheet thead .picked {
    background-color: #e1e1e1;
    color: #217346;
    border-bottom: 2px solid #217346;
}

/* column J runs on under the scroll bar */
.sheet thead .partial {
    padding-left: 24px;
    border-right: none;
}

.sheet tbody th {
    border-right-color: #b0b0b0;
    border-bottom: 1px solid #d5d5d5;
}

.sheet .data th {
    background-color: #e1e1e1;
    color: #217346;
    font-weight: bold;
    border-right: 2px solid #217346;
    border-bottom-color: #c5c5c5;
}

.sheet .tall td,
.sheet .tall th {
    height: 23px;
}

.sheet .param {
    padding-left: 2px;
    background-color: #e6e6fa;
    color: #3f55bd;
    font-size: 13px;
    font-weight: bold;
    border: 1px solid #808080;
    border-top: none;
}

.value {
    border-right: 1px solid #808080;
    border-bottom: 1px solid #808080;
}

.sheet .caption {
    padding-left: 2px;
    background-color: #d0d0d0;
    font-size: 15px;
    font-weight: bold;
    border: 1px solid #808080;
}

.heading {
    font-size: 17px;
    font-weight: bold;
}

.note {
    font-size: 15px;
}

.sheet .head td + td {
    padding-top: 1px;
    padding-right: 0;
    background-color: #4f81bd;
    color: #ffffff;
    font-size: 15px;
    font-weight: bold;
    border-right: 1px solid #ffffff;
    border-bottom: 2px solid #ffffff;
    overflow: hidden;
}

.head div {
    display: flex;
    align-items: center;
    justify-content: space-between;
}

.head span {
    min-width: 0;
    overflow: hidden;
    line-height: 17px;
}

.head button {
    flex: none;
    width: 15px;
    height: 16px;
    display: flex;
    align-items: center;
    justify-content: center;
    background-color: #f8f8f8;
    border: 1px solid #c5c5c5;
    color: #666666;
}

.head button svg {
    width: 6px;
    height: 4px;
}

.data td + td {
    text-align: right;
    background-color: #b8cce4;
    border-right: 1px solid #ffffff;
    border-bottom: 1px solid #ffffff;
}

.data:nth-child(odd) td + td {
    background-color: #dce6f1;
}

.sheet .data td.key {
    text-align: left;
    background-color: #4f81bd;
    color: #ffffff;
    font-size: 15px;
    font-weight: bold;
}

.sheet .data td.cut {
    padding-right: 0;
    border-right: none;
}

.sheet .data td.sel {
    position: relative;
    background-color: #929eb3;
    border-left: 1px solid #217346;
    border-right: 2px solid #217346;
    padding-right: 1px;
}

.sheet .data:nth-child(odd) td.sel {
    background-color: #adb1b9;
}

.sheet .data td.first {
    background-color: #b8cce4;
    border-top: 1px solid #217346;
}

.sheet .data td.last {
    border-bottom: 2px solid #217346;
}

.last::after {
    content: "";
    position: absolute;
    right: -3px;
    bottom: -3px;
    width: 5px;
    height: 5px;
    background-color: #217346;
    border: 1px solid #ffffff;
    border-right: none;
    border-bottom: none;
}

/* scroll bars of the sheet */
.vscroll {
    width: 20px;
    padding: 0 2px 0 3px;
    display: flex;
    flex-direction: column;
    background-color: #f3f3f3;
}

.vscroll button,
.hscroll button {
    width: 15px;
    height: 15px;
    display: flex;
    align-items: center;
    justify-content: center;
    background-color: #ffffff;
    border: 1px solid #c0c0c0;
    color: #777777;
}

.track {
    flex: 1;
}

.vscroll .track {
    background-color: #ebebeb;
    padding-top: 154px;
}

.vscroll .thumb {
    height: 115px;
    background-color: #ffffff;
    border: 1px solid #c0c0c0;
}

.sheet-tabs {
    height: 23px;
    display: flex;
    align-items: center;
    padding-right: 20px;
    background-color: #f3f3f3;
    border-bottom: 1px solid #d5d5d5;
}

.step {
    width: 22px;
}

.step:first-child {
    margin-left: 14px;
}

.names {
    display: flex;
    height: 100%;
    margin-left: 25px;
    border-left: 1px solid #c5c5c5;
    font-size: 13px;
}

.names button {
    height: 18px;
    padding: 0 13px;
}

.names .active {
    height: 20px;
    padding: 0 10px;
    background-color: #ffffff;
    color: #217346;
    font-weight: bold;
    border: 1px solid #b5b5b5;
    border-top: none;
    border-bottom: 2px solid #217346;
}

.add {
    display: flex;
}

.dots {
    margin: 0 12px 0 14px;
}

.hscroll {
    flex: 1;
    display: flex;
}

.hscroll .track {
    background-color: #e8e8e8;
}

.hscroll .thumb {
    width: 55px;
    height: 15px;
    background-color: #ffffff;
    border: 1px solid #c0c0c0;
}

/* solver pane */
.pane {
    width: 292px;
    display: flex;
    flex-direction: column;
    padding: 0 0 6px 6px;
    color: #000000;
    font-family: "Noto Sans", sans-serif;
    font-size: 10px;
}

.pane-title {
    height: 37px;
    display: flex;
    align-items: flex-start;
    gap: 9px;
    padding: 8px 4px 0 5px;
    color: #999999;
}

.pane-title h2 {
    flex: 1;
    margin: 0;
    font-family: "Open Sans", sans-serif;
    font-size: 20px;
    line-height: 30px;
    font-weight: normal;
    white-space: nowrap;
    color: #2a7b50;
}

.pane-title button {
    height: 22px;
    display: flex;
    align-items: center;
}

.pane-body {
    flex: 1;
    min-height: 0;
    display: flex;
    flex-direction: column;
    padding: 0 2px 20px;
    background-color: #e6eaf5;
}

.pane-tabs {
    height: 23px;
    display: flex;
    padding: 2px 6px 0;
    background: linear-gradient(#c9cfdb, #dfe4ef);
    border-bottom: 1px solid #a0a5b0;
    margin: 0 -2px;
    font-size: 11px;
}

.pane-tabs button {
    position: relative;
    isolation: isolate;
    flex: 1 1 auto;
    display: flex;
    align-items: center;
    justify-content: center;
    gap: 1px;
}

/* slanted tab shape behind the label */
.pane-tabs button::before {
    content: "";
    position: absolute;
    inset: 0 -3px -1px;
    z-index: -1;
    border: 1px solid #8f949f;
    border-bottom: none;
    border-radius: 5px 5px 0 0;
    background-color: #f4f5fa;
    transform: perspective(40px) rotateX(14deg);
    transform-origin: bottom;
}

.pane-tabs .active::before {
    background-color: #ffffff;
}

.pane-tabs svg {
    width: 14px;
    height: 14px;
}

.pane-tools {
    height: 34px;
    display: flex;
    align-items: center;
    padding: 0 10px 4px 6px;
}

.pane-tools button {
    display: flex;
    align-items: center;
    justify-content: center;
}

.pane-tools .drop {
    width: 9px;
    height: 22px;
    margin-left: 5px;
    background-color: #c9daf0;
}

.pane-tools .delete {
    margin: 0 14px 0 12px;
}

.pane-tools .check {
    margin-left: auto;
}

.pane-tools .check + .drop {
    margin-left: 2px;
}

.pane-tools .run {
    margin-left: 14px;
}

.tree-box,
.prop-box {
    display: flex;
    background-color: #ffffff;
    border: 1px solid #7d828c;
    overflow: hidden;
}

.tree-box {
    height: 120px;
    border-bottom-width: 2px;
}

.tree {
    flex: 1;
    margin: 0;
    padding: 1px 0 0 5px;
    list-style: none;
}

.tree li {
    height: 16px;
    display: flex;
    align-items: center;
    white-space: nowrap;
}

.tree .sub {
    padding-left: 16px;
}

.box {
    width: 9px;
    height: 9px;
}

.pic {
    width: 13px;
    height: 13px;
    margin: 0 3px 0 5px;
}

.current {
    background-color: #ececec;
}

.bar {
    width: 16px;
    display: flex;
    flex-direction: column;
    background-color: #f0f0f0;
}

.bar button {
    height: 17px;
    display: flex;
    align-items: center;
    justify-content: center;
}

.bar svg {
    width: 9px;
    height: 6px;
    fill: none;
    stroke: #444444;
    stroke-width: 1.5;
}

.bar .thumb {
    background-color: #cdcdcd;
}

.tree-thumb {
    height: 53px;
    margin-top: 9px;
}

.prop-thumb {
    height: 65px;
}

.prop-box {
    flex: 1;
    min-height: 0;
    margin-top: 5px;
}

.props-clip {
    flex: 1;
    overflow: hidden;
}

.props {
    width: 100%;
    table-layout: fixed;
    border-collapse: separate;
    border-spacing: 0;
    line-height: 15px;
}

.p-box { width: 12px; }
.p-44 { width: 44px; }
.p-48 { width: 48px; }

.props td,
.props th {
    height: 16px;
    padding: 0 0 0 3px;
    text-align: left;
    font-weight: normal;
    white-space: nowrap;
    border-right: 1px solid #e6eaf5;
    border-bottom: 1px solid #e6eaf5;
}

.props td:first-child {
    padding: 0;
    background-color: #e6eaf5;
}

.props svg {
    display: block;
}

.props .sort svg {
    margin-left: auto;
}

.props .cat td,
.props .cat th {
    font-weight: bold;
    background-color: #e6eaf5;
}

.props .chosen th {
    background-color: #0f78d4;
    color: #ffffff;
}

.hint {
    height: 54px;
    margin-top: 3px;
    padding: 1px 3px;
    border: 1px solid #a5a8b0;
    line-height: 13px;
    color: #0a1470;
}

.hint a {
    margin-left: 1px;
    font-weight: bold;
    color: #0a1470;
}

.hint p {
    margin: 0;
}

/* status bar */
.status {
    height: 17px;
    display: flex;
    align-items: center;
    gap: 12px;
    padding: 1px 0 0 6px;
    background-color: #267f46;
    color: #ffffff;
    font-size: 10px;
}

.status .ready {
    margin-right: auto;
}

.status button {
    display: flex;
    align-items: center;
}

.views {
    display: flex;
    gap: 22px;
    margin: 0 2px 0 14px;
}

.zoom {
    display: flex;
    align-items: center;
    gap: 4px;
    color: #14512a;
    font-size: 14px;
}

.zoom button {
    height: 14px;
    color: #14512a;
}

.zoom input {
    width: 100px;
    height: 8px;
    appearance: none;
    background: linear-gradient(#d7ebde, #d7ebde) center / 100% 1px no-repeat;
}

.zoom input::-webkit-slider-thumb {
    appearance: none;
    width: 1px;
    height: 7px;
    background-color: #ffffff;
}

.percent {
    color: #8fd0a5;
}
```
